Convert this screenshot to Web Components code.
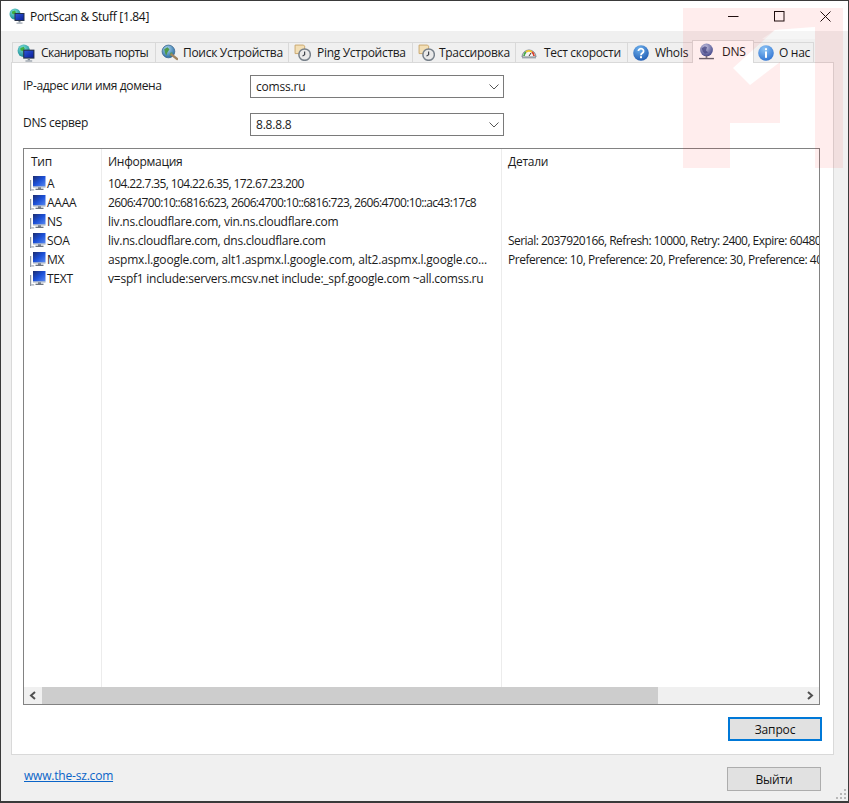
<!DOCTYPE html>
<html lang="ru">
<head>
<meta charset="utf-8">
<title>PortScan & Stuff</title>
<style>
  html, body { margin: 0; height: 100%; overflow: hidden; background: #f0f0f0; }
  body { font: 12px "Open Sans", "Noto Sans", sans-serif; color: #1a1a1a; }
</style>
</head>
<body>
<app-window></app-window>

<script>
// иконки программы, все 16x16
const ICONS = {
    globepc: `
        <defs><radialGradient id="g1" cx=".4" cy=".3" r=".8"><stop offset="0" stop-color="#7fe0d8"/><stop offset="1" stop-color="#0a7f8c"/></radialGradient>
        <linearGradient id="s1" x1="0" y1="0" x2="1" y2="1"><stop offset="0" stop-color="#2c55d8"/><stop offset="1" stop-color="#0a1f9a"/></linearGradient></defs>
        <circle cx="6" cy="6" r="5.5" fill="url(#g1)"/>
        <path d="M3 3.5l3-1 1 2-2 2-2-1zM7 8l2-.5v2l-2 1z" fill="#3fae3f"/>
        <rect x="5.5" y="5" width="10" height="8" fill="#26324a"/>
        <rect x="6.5" y="6" width="8" height="6" fill="url(#s1)"/>
        <rect x="9.5" y="13" width="2" height="1.500" fill="#7d8794"/>
        <rect x="7.5" y="14.5" width="6" height="1.2" fill="#9aa3ad"/>`,
    search: `
        <defs><radialGradient id="g2" cx=".4" cy=".3" r=".8"><stop offset="0" stop-color="#a8d4ee"/><stop offset="1" stop-color="#1a5f9c"/></radialGradient></defs>
        <circle cx="7" cy="7" r="6" fill="url(#g2)"/>
        <path d="M3 5l3-2 2 2-2 3-1 3-1-2zM9 8l2 0-1 3-2 0z" fill="#4f9a4a"/>
        <circle cx="7" cy="7" r="6" fill="none" stroke="#37628a" stroke-width=".7"/>
        <path d="M10 10l5 4" stroke="#a08560" stroke-width="2.4" stroke-linecap="round"/>`,
    ping: `
        <path d="M1 1h8l1 1v7H1z" fill="#f3dfb6" stroke="#c9a76e" stroke-width=".9"/>
        <circle cx="10" cy="10" r="5.4" fill="#e9e9e9" stroke="#77808a" stroke-width="1.4"/>
        <path d="M10 7v3l-2 1.4" fill="none" stroke="#3a3f47" stroke-width="1.1"/>`,
    gauge: `
        <path d="M1 12a7 7 0 0 1 14 0z" fill="#f4f4f4" stroke="#6c7680" stroke-width=".9"/>
        <path d="M3 11a5 5 0 0 1 2-4" fill="none" stroke="#49a849" stroke-width="1.8"/>
        <path d="M5 7a5 5 0 0 1 6 0" fill="none" stroke="#efc52e" stroke-width="1.8"/>
        <path d="M11 7a5 5 0 0 1 2 4" fill="none" stroke="#d8402c" stroke-width="1.8"/>
        <path d="M8 11l2-3" stroke="#333" stroke-width="1"/>
        <rect x="1" y="12" width="14" height="1.4" fill="#9aa2aa"/>`,
    help: `
        <defs><radialGradient id="g3" cx=".4" cy=".25" r=".85"><stop offset="0" stop-color="#6fb2ee"/><stop offset="1" stop-color="#1a55ae"/></radialGradient></defs>
        <circle cx="8" cy="8" r="7.8" fill="url(#g3)"/>
        <path d="M5.4 6a2.6 2.4 0 1 1 3.9 2.1C8.4 8.6 8 9 8 10.2" fill="none" stroke="#fff" stroke-width="1.8"/>
        <rect x="7" y="11.2" width="2" height="2" fill="#fff"/>`,
    dns: `
        <defs><radialGradient id="g4" cx=".4" cy=".3" r=".8"><stop offset="0" stop-color="#c3d3f2"/><stop offset="1" stop-color="#27408c"/></radialGradient></defs>
        <circle cx="8" cy="6.5" r="6" fill="url(#g4)"/>
        <path d="M3.5 5l3-2 2 1-1 3 2 2-3 1-2-2z" fill="#3b4f90" opacity=".8"/>
        <rect x="7.2" y="12" width="1.6" height="2" fill="#6a707a"/>
        <rect x="1" y="14" width="14" height="1.3" fill="#5f6670"/>`,
    info: `
        <defs><radialGradient id="g5" cx=".4" cy=".25" r=".85"><stop offset="0" stop-color="#8cc4f5"/><stop offset="1" stop-color="#2a6fd0"/></radialGradient></defs>
        <circle cx="8" cy="8" r="7.8" fill="url(#g5)"/>
        <rect x="7" y="3.2" width="2" height="2" fill="#fff"/>
        <rect x="7" y="6.4" width="2" height="6.4" fill="#fff"/>`,
    host: `
        <defs><linearGradient id="s2" x1="0" y1="0" x2="1" y2="1"><stop offset="0" stop-color="#1c2c6e"/><stop offset=".5" stop-color="#1c50d8"/><stop offset="1" stop-color="#5a8af0"/></linearGradient></defs>
        <rect x="0" y="4" width="1.2" height="11" fill="#8f98a3"/>
        <rect x="1.2" y="13.4" width="3" height="1" fill="#8f98a3"/>
        <rect x="3" y="0" width="12.5" height="10.5" fill="url(#s2)"/>
        <rect x="3" y="10.5" width="12.5" height="1" fill="#9aa6b5"/>
        <rect x="8" y="11.5" width="3" height="1.2" fill="#4a5362"/>
        <rect x="5.5" y="12.7" width="8" height="1.2" fill="#5c6572"/>`
};

let iconSeq = 0;

class AppIcon extends HTMLElement {
    connectedCallback() {
        const size = this.getAttribute('size') || 16;
        // у каждого экземпляра свои id, иначе градиенты из разных shadow root путаются
        const n = ++iconSeq;
        const body = (ICONS[this.getAttribute('name')] || '')
            .replace(/id="(\w+)"/g, `id="$1-${n}"`)
            .replace(/url\(#(\w+)\)/g, `url(#$1-${n})`);
        this.attachShadow({ mode: 'open' }).innerHTML = `
            <style>
                :host { display: block; width: ${size}px; height: ${size}px; flex: none; }
                svg { display: block; }
            </style>
            <svg width="${size}" height="${size}" viewBox="0 0 16 16">${body}</svg>`;
    }
}
customElements.define('app-icon', AppIcon);

class TitleBar extends HTMLElement {
    constructor() {
        super();
        this.attachShadow({ mode: 'open' }).innerHTML = `
            <style>
                :host {
                    display: flex; align-items: center; height: 30px; background: #fff;
                    padding-left: 8px; letter-spacing: -.3px; color: #111;
                }
                .title { margin-left: 5px; flex: 1; }
                .ctl { width: 46px; height: 30px; display: flex; align-items: center; justify-content: center; }
                .ctl svg { display: block; }
                .ctls { display: flex; }
            </style>
            <app-icon name="globepc"></app-icon>
            <span class="title">PortScan &amp; Stuff [1.84]</span>
            <div class="ctls">
                <div class="ctl"><svg width="11" height="11"><path d="M0 5.5h10.5" stroke="#111"/></svg></div>
                <div class="ctl"><svg width="11" height="11"><rect x=".5" y=".5" width="9.5" height="9.5" fill="none" stroke="#111"/></svg></div>
                <div class="ctl"><svg width="11" height="11"><path d="M.5.5l10 10M10.5.5l-10 10" stroke="#111"/></svg></div>
            </div>`;
    }
}
customElements.define('title-bar', TitleBar);

class TabItem extends HTMLElement {
    constructor() {
        super();
        this.attachShadow({ mode: 'open' }).innerHTML = `
            <style>
                :host {
                    display: flex; align-items: center; height: 20px; box-sizing: border-box;
                    background: #f0f0f0; border: 1px solid #d9d9d9; border-bottom: 0; margin-left: -1px;
                    padding-left: var(--pad, 5px); white-space: nowrap; letter-spacing: -.3px; color: #1a1a1a;
                }
                :host([selected]) {
                    background: #fff; height: 23px; margin: 0 -1px 0 -1px; position: relative;
                    z-index: 1; align-items: flex-start; padding-top: 2px; margin-bottom: -1px;
                }
                ::slotted(app-icon) { margin-right: var(--gap, 6px); }
            </style>
            <slot></slot>`;
    }
}
customElements.define('tab-item', TabItem);

class TabStrip extends HTMLElement {
    constructor() {
        super();
        this.attachShadow({ mode: 'open' }).innerHTML = `
            <style>
                :host { display: flex; align-items: flex-end; height: 31px; padding-left: 12px; box-sizing: border-box; }
            </style>
            <slot></slot>`;
    }
}
customElements.define('tab-strip', TabStrip);

class ComboBox extends HTMLElement {
    constructor() {
        super();
        this.attachShadow({ mode: 'open' }).innerHTML = `
            <style>
                :host {
                    display: flex; align-items: center; justify-content: space-between; box-sizing: border-box;
                    width: 254px; height: 23px; border: 1px solid #7a7a7a; background: #fff;
                    padding: 0 4px 0 5px; letter-spacing: -.2px;
                }
                svg { display: block; }
            </style>
            <slot></slot>
            <svg width="10" height="6"><path d="M.5.5l4.5 4.5 4.5-4.5" fill="none" stroke="#555" stroke-width="1"/></svg>`;
    }
}
customElements.define('combo-box', ComboBox);

class FieldRow extends HTMLElement {
    constructor() {
        super();
        const label = this.getAttribute('label');
        this.attachShadow({ mode: 'open' }).innerHTML = `
            <style>
                :host { display: flex; align-items: center; height: 23px; letter-spacing: -.33px; }
                .lbl { width: 227px; flex: none; margin-top: var(--lift, -2px); }
            </style>
            <div class="lbl">${label}</div>
            <slot></slot>`;
    }
}
customElements.define('field-row', FieldRow);

class ResultRow extends HTMLElement {
    constructor() {
        super();
        const icon = this.hasAttribute('icon') ? '<app-icon name="host"></app-icon>' : '';
        this.attachShadow({ mode: 'open' }).innerHTML = `
            <style>
                :host { display: grid; grid-template-columns: 78px 400px 1fr; height: 19px; }
                :host([head]) { height: 25px; }
                :host([fill]) { height: auto; flex: 1; }
                .c {
                    display: flex; align-items: center; white-space: nowrap; overflow: hidden;
                    padding-left: 6px; box-sizing: border-box; border-right: 1px solid #ececec; min-width: 0;
                    letter-spacing: -.27px; color: #1a1a1a;
                }
                .c:last-child { border-right: 0; padding-right: 0; }
                .first { padding-left: ${icon ? '6px' : '7px'}; }
                app-icon { margin-right: 1px; }
            </style>
            <div class="c first">${icon}<slot name="type"></slot></div>
            <div class="c"><slot name="info"></slot></div>
            <div class="c"><slot name="detail"></slot></div>`;
    }
}
customElements.define('result-row', ResultRow);

class HScrollbar extends HTMLElement {
    constructor() {
        super();
        this.attachShadow({ mode: 'open' }).innerHTML = `
            <style>
                :host { display: flex; height: 17px; background: #f0f0f0; flex: none; }
                .btn { width: 18px; flex: none; display: flex; align-items: center; justify-content: center; }
                .thumb { width: 616px; background: #cdcdcd; }
                .rest { flex: 1; }
                svg { display: block; }
            </style>
            <div class="btn"><svg width="8" height="9"><path d="M6 1L2 4.5 6 8" fill="none" stroke="#505050" stroke-width="2"/></svg></div>
            <div class="thumb"></div>
            <div class="rest"></div>
            <div class="btn"><svg width="8" height="9"><path d="M2 1l4 3.500L2 8" fill="none" stroke="#505050" stroke-width="2"/></svg></div>`;
    }
}
customElements.define('h-scrollbar', HScrollbar);

class ResultTable extends HTMLElement {
    constructor() {
        super();
        this.attachShadow({ mode: 'open' }).innerHTML = `
            <style>
                :host {
                    display: flex; flex-direction: column; box-sizing: border-box; height: 557px;
                    border: 1px solid #828282; background: #fff; overflow: hidden;
                }
                .rows { flex: 1; display: flex; flex-direction: column; min-height: 0; }
            </style>
            <div class="rows"><slot></slot></div>
            <h-scrollbar></h-scrollbar>`;
    }
}
customElements.define('result-table', ResultTable);

class WinButton extends HTMLElement {
    constructor() {
        super();
        this.attachShadow({ mode: 'open' }).innerHTML = `
            <style>
                :host {
                    display: flex; align-items: center; justify-content: center; box-sizing: border-box;
                    width: 94px; height: 24px; background: #e1e1e1; border: 1px solid #adadad;
                    letter-spacing: -.15px; color: #111;
                }
                :host([default]) { border: 2px solid #0078d7; }
            </style>
            <slot></slot>`;
    }
}
customElements.define('win-button', WinButton);

class AppWindow extends HTMLElement {
    constructor() {
        super();
        this.attachShadow({ mode: 'open' }).innerHTML = `
            <style>
                :host {
                    display: flex; flex-direction: column; position: relative; box-sizing: border-box;
                    width: 849px; height: 803px; background: #f0f0f0; overflow: hidden;
                    border: solid #3a3a3a; border-width: 1px 1px 2px 1px;
                }
                .pane {
                    box-sizing: border-box; height: 693px; margin: 0 14px 0 10px; background: #fff;
                    border: 1px solid #d9d9d9; padding: 12px 11px 0 11px; display: flex; flex-direction: column;
                }
                field-row + field-row { margin-top: 15px; }
                field-row.dns { --lift: -4px; }
                result-table { margin-top: 12px; margin-right: 2px; }
                .actions { display: flex; justify-content: flex-end; margin-top: 12px; }
                .foot {
                    flex: 1; display: flex; align-items: flex-start; justify-content: space-between;
                    padding: 12px 27px 0 23px; position: relative;
                }
                .link { color: #0a64c8; text-decoration: underline; letter-spacing: -.2px; }
                .grip { position: absolute; right: 1px; bottom: 1px; }
                .mark { position: absolute; left: 682px; top: 7px; pointer-events: none; z-index: 5; }
            </style>
            <title-bar></title-bar>
            <tab-strip>
                <tab-item style="width:144px;--pad:4px;--gap:6px;letter-spacing:-.54px"><app-icon name="globepc" size="18"></app-icon>Сканировать порты</tab-item>
                <tab-item style="width:134px;--gap:5px"><app-icon name="search" size="17"></app-icon>Поиск Устройства</tab-item>
                <tab-item style="width:125px"><app-icon name="ping" size="17"></app-icon>Ping Устройства</tab-item>
                <tab-item style="width:104px;--gap:4px"><app-icon name="ping" size="17"></app-icon>Трассировка</tab-item>
                <tab-item style="width:113px;--gap:7px"><app-icon name="gauge" size="16"></app-icon>Тест скорости</tab-item>
                <tab-item style="width:66px"><app-icon name="help" size="16"></app-icon>WhoIs</tab-item>
                <tab-item style="width:62px;--gap:7px" selected><app-icon name="dns" size="17"></app-icon>DNS</tab-item>
                <tab-item style="width:62px;--gap:5px"><app-icon name="info" size="16"></app-icon>О нас</tab-item>
            </tab-strip>
            <div class="pane">
                <field-row label="IP-адрес или имя домена"><combo-box>comss.ru</combo-box></field-row>
                <field-row class="dns" label="DNS сервер"><combo-box>8.8.8.8</combo-box></field-row>
                <result-table>
                    <result-row head><span slot="type">Тип</span><span slot="info">Информация</span><span slot="detail">Детали</span></result-row>
                    <result-row icon><span slot="type">A</span><span slot="info" style="letter-spacing:-.6px">104.22.7.35, 104.22.6.35, 172.67.23.200</span></result-row>
                    <result-row icon><span slot="type">AAAA</span><span slot="info" style="letter-spacing:-.65px">2606:4700:10::6816:623, 2606:4700:10::6816:723, 2606:4700:10::ac43:17c8</span></result-row>
                    <result-row icon><span slot="type">NS</span><span slot="info" style="letter-spacing:-.22px">liv.ns.cloudflare.com, vin.ns.cloudflare.com</span></result-row>
                    <result-row icon><span slot="type">SOA</span><span slot="info" style="letter-spacing:-.25px">liv.ns.cloudflare.com, dns.cloudflare.com</span><span slot="detail" style="letter-spacing:-.54px">Serial: 2037920166, Refresh: 10000, Retry: 2400, Expire: 604800</span></result-row>
                    <result-row icon><span slot="type">MX</span><span slot="info" style="letter-spacing:-.18px">aspmx.l.google.com, alt1.aspmx.l.google.com, alt2.aspmx.l.google.co...</span><span slot="detail" style="letter-spacing:-.46px">Preference: 10, Preference: 20, Preference: 30, Preference: 40</span></result-row>
                    <result-row icon><span slot="type">TEXT</span><span slot="info" style="letter-spacing:-.23px">v=spf1 include:servers.mcsv.net include:_spf.google.com ~all.comss.ru</span></result-row>
                    <result-row fill></result-row>
                </result-table>
                <div class="actions"><win-button default>Запрос</win-button></div>
            </div>
            <div class="foot">
                <span class="link">www.the-sz.com</span>
                <win-button>Выйти</win-button>
                <svg class="grip" width="11" height="11" fill="#b8b8b8">
                    <rect x="8" y="0" width="2" height="2"/><rect x="4" y="4" width="2" height="2"/><rect x="8" y="4" width="2" height="2"/>
                    <rect x="0" y="8" width="2" height="2"/><rect x="4" y="8" width="2" height="2"/><rect x="8" y="8" width="2" height="2"/>
                </svg>
            </div>
            <svg class="mark" width="160" height="160" viewBox="683 8 160 160">
                <path fill-rule="evenodd" fill="rgba(255,0,0,.07)" d="M683 8h160v160H683zM775 30l40-3v141h-85v-45h50V62l-30 23-17-17z"/>
                <path fill="rgba(255,255,255,.35)" d="M775 30l40-3v12h-53z"/>
            </svg>`;
    }
}
customElements.define('app-window', AppWindow);
</script>
</body>
</html>
